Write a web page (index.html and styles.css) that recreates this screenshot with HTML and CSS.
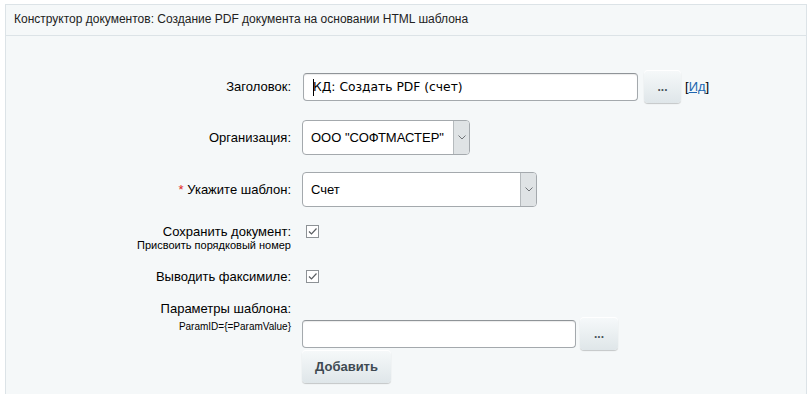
FILE: index.html
```html
<!DOCTYPE html>
<html lang="ru">
<head>
  <meta charset="UTF-8">
  <title>Конструктор документов</title>
  <link rel="stylesheet" href="styles.css">
</head>
<body>
  <!-- Panel -->
  <div class="panel">
    <div class="panel-title">Конструктор документов: Создание PDF документа на основании HTML шаблона</div>

    <div class="form">
      <!-- Title -->
      <div class="row row-title">
        <label class="label">Заголовок:</label>
        <div class="controls">
          <div class="text-input wide"><span class="caret"></span>КД: Создать PDF (счет)</div>
          <button class="btn btn-dots">...</button>
          <span class="id-link">[<a href="#">Ид</a>]</span>
        </div>
      </div>

      <!-- Organization -->
      <div class="row row-select">
        <label class="label">Организация:</label>
        <div class="controls">
          <div class="select select-org">
            <span class="select-value">ООО "СОФТМАСТЕР"</span>
            <span class="select-arrow">
              <svg width="8" height="5" viewBox="0 0 8 5"><path d="M0.5 0.5 L4 4 L7.5 0.5" fill="none" stroke="#707478" stroke-width="1"/></svg>
            </span>
          </div>
        </div>
      </div>

      <!-- Template -->
      <div class="row row-select">
        <label class="label"><span class="req">*</span> Укажите шаблон:</label>
        <div class="controls">
          <div class="select select-tpl">
            <span class="select-value">Счет</span>
            <span class="select-arrow">
              <svg width="8" height="5" viewBox="0 0 8 5"><path d="M0.5 0.5 L4 4 L7.5 0.5" fill="none" stroke="#707478" stroke-width="1"/></svg>
            </span>
          </div>
        </div>
      </div>

      <!-- Save document -->
      <div class="row row-check row-save">
        <label class="label">Сохранить документ:<small>Присвоить порядковый номер</small></label>
        <div class="controls">
          <span class="checkbox">
            <svg width="11" height="11" viewBox="0 0 11 11"><path d="M2 5.5 L4.5 8 L9.5 2.5" fill="none" stroke="#5a5e62" stroke-width="1.2"/></svg>
          </span>
        </div>
      </div>

      <!-- Facsimile -->
      <div class="row row-check">
        <label class="label">Выводить факсимиле:</label>
        <div class="controls">
          <span class="checkbox">
            <svg width="11" height="11" viewBox="0 0 11 11"><path d="M2 5.5 L4.5 8 L9.5 2.5" fill="none" stroke="#5a5e62" stroke-width="1.2"/></svg>
          </span>
        </div>
      </div>

      <!-- Template params -->
      <div class="row row-params">
        <label class="label">Параметры шаблона:<small class="param-hint">ParamID={=ParamValue}</small></label>
        <div class="controls-stack">
          <div class="controls">
            <div class="text-input narrow"></div>
            <button class="btn btn-dots btn-dots-small">...</button>
          </div>
          <button class="btn btn-add">Добавить</button>
        </div>
      </div>
    </div>
  </div>
</body>
</html>
```

FILE: styles.css
```css
/* Base */
* {
  margin: 0;
  padding: 0;
  box-sizing: border-box;
}
body {
  font-family: 'Liberation Sans', Arial, sans-serif;
  font-size: 13px;
  color: #000;
  background: #fff;
  padding: 4px 3px 0 5px;
  height: 394px;
  overflow: hidden;
}

/* Panel */
.panel {
  background: #f5f8f9;
  border: 1px solid #dce3e7;
  border-bottom: none;
  height: 400px;
}
.panel-title {
  height: 31px;
  line-height: 28px;
  padding-left: 8px;
  font-size: 12px;
  color: #222;
  border-bottom: 1px solid #dce3e7;
}

/* Form layout */
.form {
  display: flex;
  flex-direction: column;
  gap: 17px;
  padding-top: 34px;
}
.row {
  display: grid;
  grid-template-columns: 285px 1fr;
  column-gap: 11px;
  align-items: center;
}
.label {
  text-align: right;
  line-height: 15px;
}
.label small {
  display: block;
  font-size: 11px;
  line-height: 13px;
}
.req {
  color: #e0261f;
}
.controls {
  display: flex;
  align-items: center;
}

/* Inputs */
.text-input {
  height: 28px;
  background: #fff;
  border: 1px solid #a4a9ad;
  border-top-color: #8f9498;
  border-radius: 4px;
  box-shadow: inset 0 1px 1px rgba(0, 0, 0, 0.08);
  padding-left: 9px;
  line-height: 26px;
  font-family: 'DejaVu Sans', sans-serif;
  font-size: 12.3px;
  color: #000;
  position: relative;
}
.text-input.wide {
  width: 335px;
  margin-left: 1px;
}
.text-input.narrow {
  width: 274px;
}
.caret {
  position: absolute;
  left: 9px;
  top: 5px;
  width: 1px;
  height: 17px;
  background: #000;
}

/* Buttons */
.btn {
  font-family: 'Liberation Sans', Arial, sans-serif;
  border: none;
  border-radius: 4px;
  background: linear-gradient(#f6f9fa, #dfe6e9);
  box-shadow: 0 1px 1px rgba(0, 0, 0, 0.2), inset 0 1px 0 #fff;
  color: #3f4a52;
  cursor: pointer;
}
.btn-dots {
  width: 37px;
  height: 33px;
  margin-left: 6px;
  font-size: 12px;
  font-weight: bold;
  color: #4a545b;
}
.btn-dots-small {
  width: 38px;
  margin-left: 4px;
}
.btn-add {
  width: 89px;
  height: 33px;
  font-size: 13px;
  font-weight: bold;
}
.id-link {
  margin-left: 4px;
}
.id-link a {
  color: #2067b0;
  text-decoration: underline;
}

/* Selects */
.select {
  display: flex;
  height: 35px;
  background: #fff;
  border: 1px solid #a4a9ad;
  border-radius: 4px;
  overflow: hidden;
}
.select-org {
  width: 168px;
}
.select-tpl {
  width: 235px;
}
.select-value {
  flex: 1;
  line-height: 33px;
  padding-left: 8px;
}
.select-arrow {
  width: 16px;
  background: #dfe3e5;
  border-left: 1px solid #b5babd;
  display: flex;
  align-items: center;
  justify-content: center;
}

/* Checkboxes */
.row-check .controls {
  padding-left: 4px;
}
.row-save {
  align-items: start;
}
.row-save .controls {
  padding-top: 1px;
}
.checkbox {
  width: 13px;
  height: 13px;
  border: 1px solid #8d9296;
  background: #fff;
  display: flex;
  align-items: center;
  justify-content: center;
}

/* Params */
.row-params {
  align-items: start;
}
.label .param-hint {
  font-size: 10px;
  margin-top: 4px;
}
.controls-stack {
  padding-top: 16px;
  display: flex;
  flex-direction: column;
  align-items: flex-start;
}
```
